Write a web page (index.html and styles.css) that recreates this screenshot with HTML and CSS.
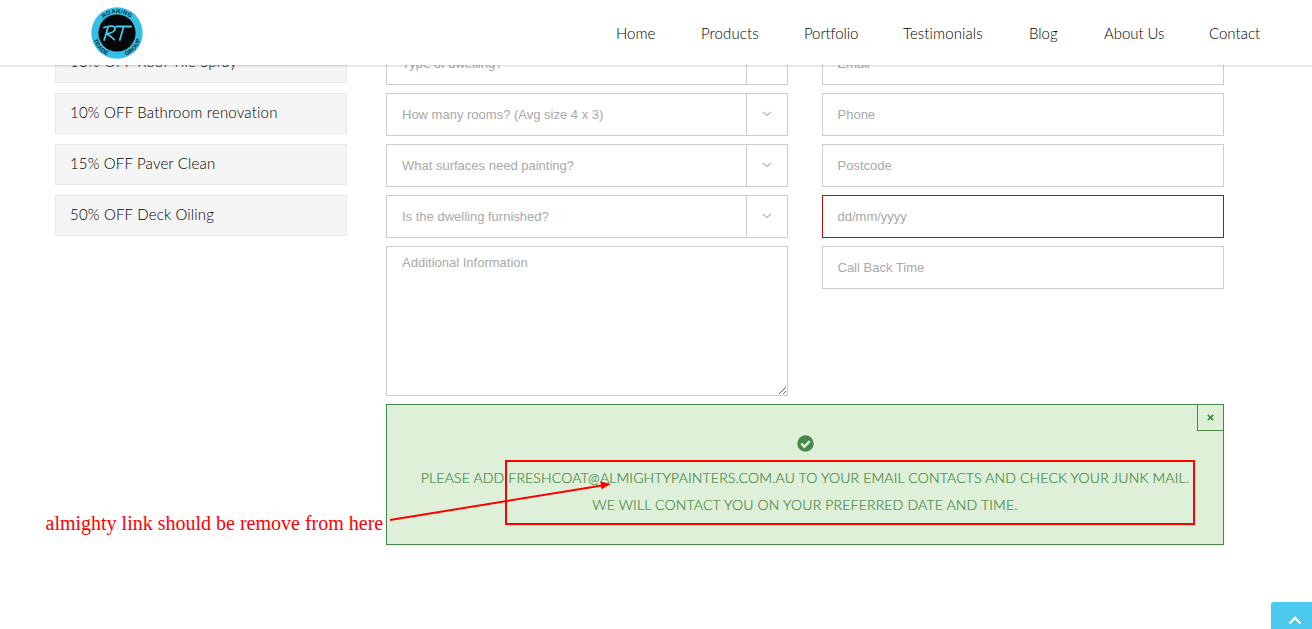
FILE: index.html
```html
<!DOCTYPE html>
<html lang="en">
<head>
<meta charset="utf-8">
<title>Roaring Trade Group</title>
<link rel="stylesheet" href="styles.css">
</head>
<body>
<header class="header">
  <svg class="logo" viewBox="0 0 52 52" width="52" height="52" aria-label="Roaring Trade Group">
    <defs>
      <path id="arc-top" d="M6 26a20 20 0 0 1 40 0"/>
      <path id="arc-left" d="M1.700 26a24.300 24.300 0 0 0 24.300 24.300"/>
      <path id="arc-right" d="M26 50.300a24.300 24.300 0 0 0 24.300-24.300"/>
    </defs>
    <circle cx="26" cy="26" r="25.7" fill="#35bfe8"/>
    <circle cx="26" cy="26" r="18.6" fill="#030708"/>
    <g class="logo-ring">
      <text><textPath href="#arc-top" startOffset="50%" text-anchor="middle">ROARING</textPath></text>
      <text><textPath href="#arc-left" startOffset="46%" text-anchor="middle">TRADE</textPath></text>
      <text><textPath href="#arc-right" startOffset="54%" text-anchor="middle">GROUP</textPath></text>
    </g>
    <g fill="none" stroke="#45c7ee" stroke-width="1.8" stroke-linecap="round" stroke-linejoin="round">
      <path d="M17 20.200 13.200 33M13 20.500c5-2.200 11.500-2 11.200 1.200-.3 3-5 4.800-8.600 5.200 3 1.300 5.500 3.300 7.600 5.600"/>
      <path d="M25.300 19.500h14.800M32.600 19.800 28.800 33"/>
    </g>
  </svg>
  <nav class="nav">
    <a class="home">Home</a><a class="products">Products</a><a class="portfolio">Portfolio</a><a class="testimonials">Testimonials</a><a class="blog">Blog</a><a class="about">About Us</a><a class="contact">Contact</a>
  </nav>
</header>

<main class="page">
  <aside class="offers">
    <div class="offer"><span class="tile">10% OFF Roof Tile Spray</span></div>
    <div class="offer"><span class="bath">10% OFF Bathroom renovation</span></div>
    <div class="offer"><span class="paver">15% OFF Paver Clean</span></div>
    <div class="offer"><span class="deck">50% OFF Deck Oiling</span></div>
  </aside>
  <form class="quote">
    <div class="column">
      <div class="field select"><span>Type of dwelling?</span><i class="toggle"><svg width="10" height="6" viewBox="0 0 10 6"><path d="M1 1l4 3.500L9 1"/></svg></i></div>
      <div class="field select"><span>How many rooms? (Avg size 4 x 3)</span><i class="toggle"><svg width="10" height="6" viewBox="0 0 10 6"><path d="M1 1l4 3.500L9 1"/></svg></i></div>
      <div class="field select"><span>What surfaces need painting?</span><i class="toggle"><svg width="10" height="6" viewBox="0 0 10 6"><path d="M1 1l4 3.500L9 1"/></svg></i></div>
      <div class="field select"><span>Is the dwelling furnished?</span><i class="toggle"><svg width="10" height="6" viewBox="0 0 10 6"><path d="M1 1l4 3.500L9 1"/></svg></i></div>
      <textarea class="notes" placeholder="Additional Information"></textarea>
    </div>
    <div class="column contact-fields">
      <div class="field"><span>Email</span></div>
      <div class="field"><span>Phone</span></div>
      <div class="field"><span>Postcode</span></div>
      <div class="field invalid"><span>dd/mm/yyyy</span></div>
      <div class="field"><span>Call Back Time</span></div>
    </div>
    <div class="alert">
      <div class="close"><svg width="7" height="7" viewBox="0 0 7 7"><path d="M.8.8l5.400 5.400M6.200.8.8 6.200"/></svg></div>
      <svg class="check" width="17" height="17" viewBox="0 0 17 17"><circle cx="8.500" cy="8.500" r="8.200" fill="#468847"/><path d="M4.200 8.500l3.100 3.200 5.500-5.600" fill="none" stroke="#dff0d8" stroke-width="2.400"/></svg>
      <p class="message-main">PLEASE ADD FRESHCOAT@ALMIGHTYPAINTERS.COM.AU TO YOUR EMAIL CONTACTS AND CHECK YOUR JUNK MAIL.</p>
      <p class="message-sub">WE WILL CONTACT YOU ON YOUR PREFERRED DATE AND TIME.</p>
    </div>
  </form>
</main>

<div class="to-top"><svg width="14" height="9" viewBox="0 0 14 9"><path d="M1.500 7.500 7 2l5.500 5.500"/></svg></div>
<div class="highlight"></div>
<div class="note">almighty link should be remove from here</div>
<svg class="arrow" width="230" height="50" viewBox="0 0 230 50"><path d="M5 45 217 10.500" stroke="#f00" stroke-width="2"/><path d="M226 9l-9.500 5.200-1-7.800z" fill="#f00"/></svg>
</body>
</html>
```

FILE: styles.css
```css
* { box-sizing: border-box; }
body {
  margin: 0;
  height: 629px;
  overflow: hidden;
  position: relative;
  background: #fff;
  font-family: Lato, "Open Sans", sans-serif;
  font-weight: 300;
  font-variant-ligatures: none;
}
.header {
  position: relative;
  z-index: 2;
  display: flex;
  justify-content: space-between;
  height: 65px;
  padding: 7px 52px 0 91px;
  background: #fff;
  box-shadow: 0 1px 2px rgba(0, 0, 0, .18);
}
.logo { width: 52px; height: 52px; }
.logo-ring { font: bold 5.8px "Liberation Sans", Arial, sans-serif; fill: #07242e; letter-spacing: .3px; }
.nav { display: flex; gap: 45px; height: 53px; line-height: 53px; font-size: 15px; color: #000; white-space: nowrap; }
.nav a { display: block; }
.home { width: 40px; }
.products { width: 58px; letter-spacing: .1px; }
.portfolio { width: 54px; letter-spacing: -.1px; }
.testimonials { width: 81px; letter-spacing: .1px; }
.blog { width: 30px; }
.about { width: 60px; letter-spacing: -.05px; }
.contact { width: 51px; }

.page { display: flex; gap: 39px; margin-top: -23px; padding-left: 55px; }
.offers { display: flex; flex-direction: column; gap: 10px; width: 292px; }
.offer {
  height: 41px;
  padding-left: 14px;
  border: 1px solid #e9e9e9;
  background: #f5f5f5;
  font-size: 15px;
  line-height: 37px;
  color: #000;
  white-space: nowrap;
}
.tile { letter-spacing: .2px; }
.bath { letter-spacing: .2px; }
.paver { letter-spacing: .16px; }
.deck { letter-spacing: .18px; }
.quote { display: grid; grid-template-columns: 402px 402px; column-gap: 34px; row-gap: 8px; font-weight: 400; }
.column { display: flex; flex-direction: column; gap: 8px; }
.field {
  height: 43px;
  padding-left: 15px;
  border: 1px solid #ccc;
  font: 13px/41px "Liberation Sans", Arial, sans-serif;
  color: #a9a9a9;
}
.contact-fields .field { padding-left: 14.5px; }
.select { display: flex; justify-content: space-between; }
.toggle { display: flex; align-items: center; justify-content: center; width: 41px; padding-bottom: 2px; border-left: 1px solid #ccc; }
.toggle path { fill: none; stroke: #b5b5b5; stroke-width: 1.1; }
.field.invalid { border-color: #bc1010; }
.notes {
  display: block;
  width: 402px;
  height: 150px;
  margin: 0;
  padding: 8px 15px;
  border: 1px solid #ccc;
  font: 13px/15px "Liberation Sans", Arial, sans-serif;
  outline: 0;
}
.notes::placeholder { color: #a9a9a9; }
.alert {
  grid-column: 1 / 3;
  position: relative;
  height: 141px;
  padding-top: 30px;
  border: 1px solid #468847;
  background: #dff0d8;
  box-shadow: 0 1px 2px rgba(0, 0, 0, .08);
  color: #468847;
  font-size: 14px;
  font-weight: 300;
  line-height: 27px;
  text-align: center;
  white-space: nowrap;
}
.alert p { margin: 0; -webkit-text-stroke: .2px #468847; }
.message-main { letter-spacing: .165px; }
.message-sub { letter-spacing: .18px; }
.check { display: block; margin: 0 auto 12px; }
.close {
  position: absolute;
  top: 0;
  right: 0;
  display: flex;
  align-items: center;
  justify-content: center;
  width: 26px;
  height: 26px;
  border: solid #468847;
  border-width: 0 0 1px 1px;
}
.close path { stroke: #468847; stroke-width: 1.7; }

.to-top {
  position: absolute;
  left: 1271px;
  top: 602px;
  width: 41px;
  height: 27px;
  padding: 14px 0 0 17px;
  border-top-left-radius: 3px;
  background: #4bc9ef;
}
.to-top svg { display: block; }
.to-top path { fill: none; stroke: #fff; stroke-width: 2.4; }
.highlight { position: absolute; left: 505px; top: 460px; width: 690px; height: 65px; border: 2px solid #f00; }
.note {
  position: absolute;
  left: 45.5px;
  top: 512px;
  font: 20px/23px "Liberation Serif", "Times New Roman", serif;
  color: #f00;
  white-space: nowrap;
}
.arrow { position: absolute; left: 385px; top: 475px; }
```
